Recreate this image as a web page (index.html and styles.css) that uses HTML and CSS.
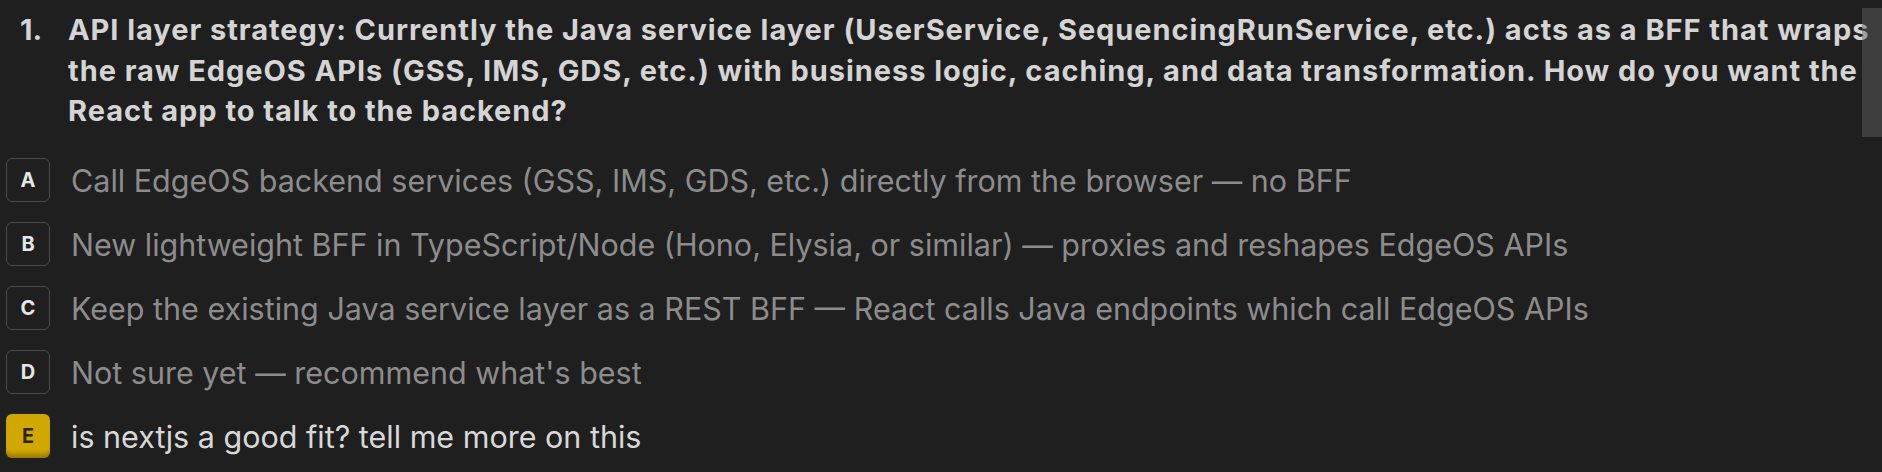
FILE: index.html
```html
<!DOCTYPE html>
<html lang="en">
<head>
<meta charset="utf-8">
<title>Question</title>
<link rel="stylesheet" href="styles.css">
</head>
<body>
<div class="panel">
  <div class="question">
    <span class="qnum">1.</span>
    <span class="qtext">API layer strategy: Currently the Java service layer (UserService, SequencingRunService, etc.) acts as a BFF that wraps the raw EdgeOS APIs (GSS, IMS, GDS, etc.) with business logic, caching, and data transformation. How do you want the React app to talk to the backend?</span>
  </div>
  <ul class="options">
    <li class="option"><span class="badge">A</span><span class="label">Call EdgeOS backend services (GSS, IMS, GDS, etc.) directly from the browser — no BFF</span></li>
    <li class="option"><span class="badge">B</span><span class="label">New lightweight BFF in TypeScript/Node (Hono, Elysia, or similar) — proxies and reshapes EdgeOS APIs</span></li>
    <li class="option"><span class="badge">C</span><span class="label">Keep the existing Java service layer as a REST BFF — React calls Java endpoints which call EdgeOS APIs</span></li>
    <li class="option"><span class="badge">D</span><span class="label">Not sure yet — recommend what's best</span></li>
    <li class="option selected"><span class="badge">E</span><span class="label">is nextjs a good fit? tell me more on this</span></li>
  </ul>
  <div class="scrollbar"></div>
</div>
</body>
</html>
```
FILE: styles.css
```css
html, body {
  margin: 0;
  padding: 0;
  background: #1f1f1f;
}
body {
  font-family: Inter, "Noto Sans", sans-serif;
  width: 1882px;
  height: 472px;
  overflow: hidden;
}
.panel {
  position: relative;
  height: 472px;
  padding-top: 10px;
  box-sizing: border-box;
}
.question {
  display: flex;
  padding-left: 20px;
  margin-right: -30px;
  font-size: 29px;
  line-height: 40.7px;
  font-weight: 700;
  letter-spacing: 0.95px;
  color: #d4d4d4;
}
.qnum {
  flex: 0 0 48px;
  letter-spacing: 0;
}
.qtext {
  flex: 1;
}
.options {
  list-style: none;
  margin: 16px 0 0 0;
  padding: 0 0 0 6px;
}
.option {
  display: flex;
  align-items: center;
  height: 64px;
  gap: 21px;
}
.badge {
  flex: 0 0 auto;
  width: 44px;
  height: 44px;
  box-sizing: border-box;
  border: 1px solid #4a4a4a;
  border-radius: 6px;
  display: flex;
  align-items: center;
  justify-content: center;
  font-size: 20px;
  font-weight: 700;
  color: #e6e6e6;
}
.label {
  font-size: 30.5px;
  color: #8c8c8c;
  white-space: nowrap;
}
.selected .badge {
  border: none;
  background: #d1a800;
  color: #2a2410;
  box-shadow: inset 0 -7px 4px -3px rgba(60, 40, 0, 0.35);
}
.selected .label {
  color: #d8d8d8;
}
.scrollbar {
  position: absolute;
  right: 0;
  top: 8px;
  width: 20px;
  height: 129px;
  background: rgba(100, 100, 100, 0.45);
}
```
